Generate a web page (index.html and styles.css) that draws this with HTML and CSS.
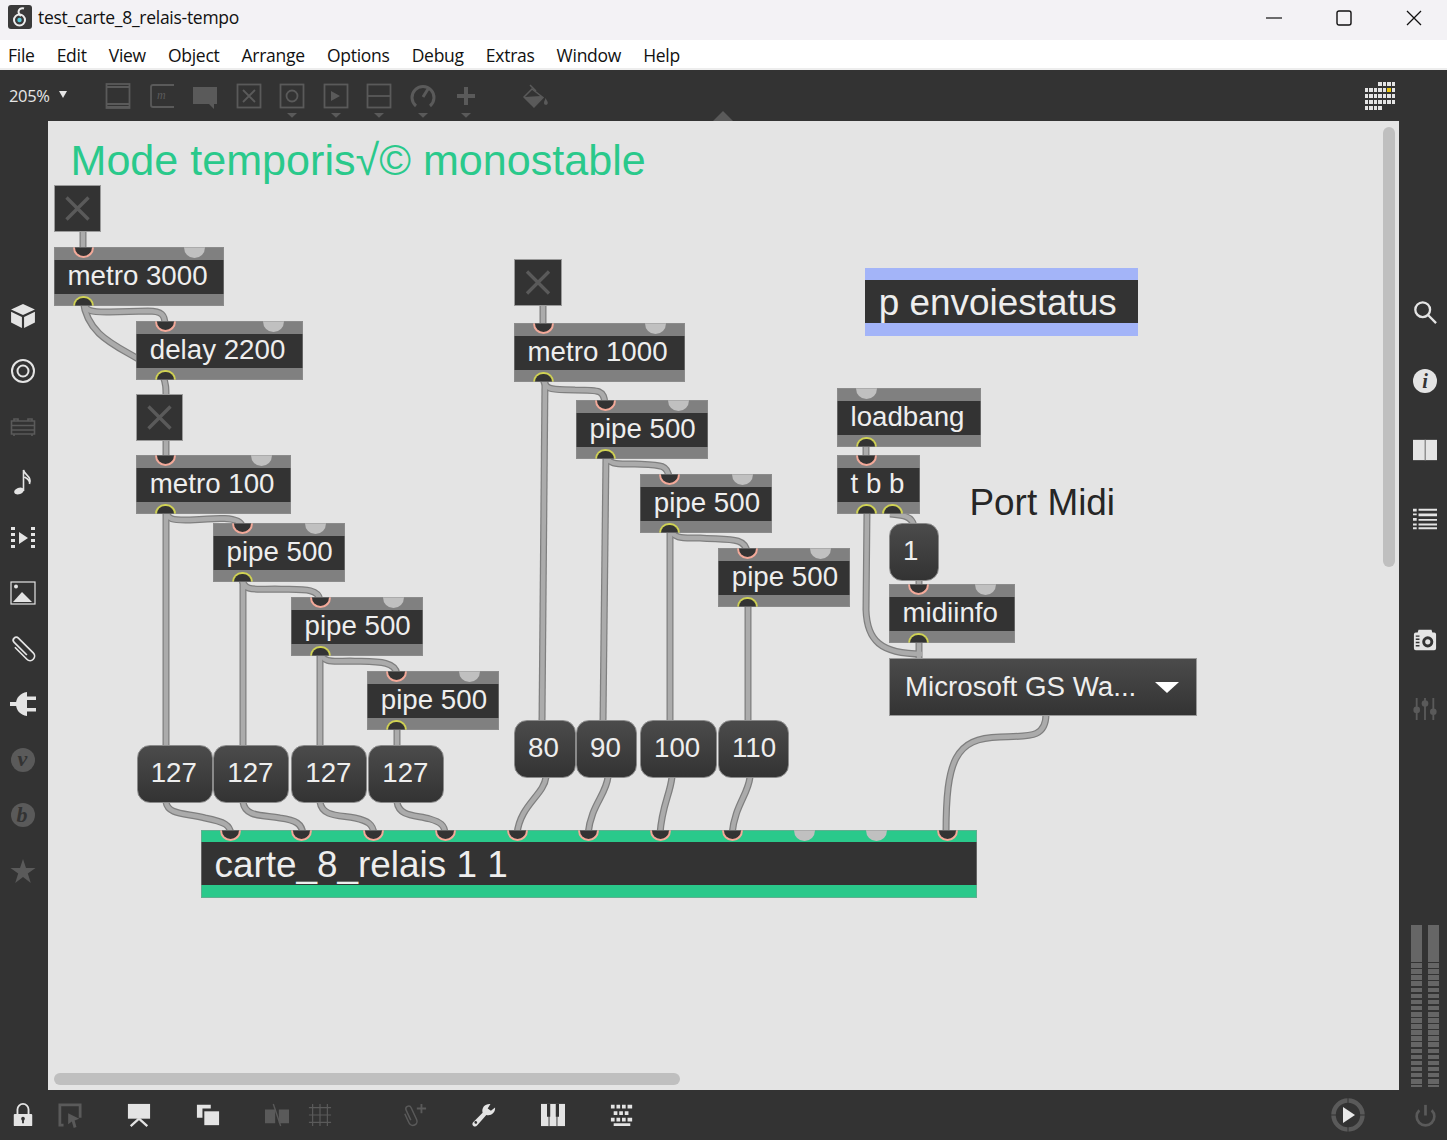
FILE: index.html
```html
<!DOCTYPE html>
<html lang="en">
<head>
<meta charset="utf-8">
<title>test_carte_8_relais-tempo</title>
<link rel="stylesheet" href="styles.css">
</head>
<body>
<div class="window">
  <header class="titlebar">
    <svg class="app-icon" viewBox="0 0 24 24"><rect width="24" height="24" rx="3" fill="#3a3a3a"/><path d="M16 3.500c-3-1-5.500 1-5.500 3.500 0 2 1.500 3 2.500 4" fill="none" stroke="#eee" stroke-width="2"/><circle cx="11.500" cy="15" r="5.500" fill="none" stroke="#eee" stroke-width="2"/><circle cx="11.500" cy="15" r="2.200" fill="#58c8d8"/></svg>
    <span class="title-text">test_carte_8_relais-tempo</span>
    <div class="win-controls">
      <svg viewBox="0 0 16 16"><path d="M0 8h16" stroke="#111" stroke-width="1.200"/></svg>
      <svg viewBox="0 0 16 16"><rect x="1" y="1" width="14" height="14" rx="2" fill="none" stroke="#111" stroke-width="1.400"/></svg>
      <svg viewBox="0 0 16 16"><path d="M1 1l14 14M15 1L1 15" stroke="#111" stroke-width="1.300"/></svg>
    </div>
  </header>
  <nav class="menubar">
    <span>File</span><span>Edit</span><span>View</span><span>Object</span><span>Arrange</span><span>Options</span><span>Debug</span><span>Extras</span><span>Window</span><span>Help</span>
  </nav>
  <div class="toolbar">
    <span class="zoom-label">205%</span><span class="zoom-caret"></span>
    <div class="tools">
      <svg viewBox="0 0 26 26" class="tool line"><rect x="1.500" y="1" width="23" height="24"/><path d="M1 4h24M1 21h24M1 24h24"/></svg>
      <svg viewBox="0 0 26 26" class="tool line"><path d="M25 2H4Q2 2 2 4v18q0 2 2 2h21"/><text x="8" y="16" class="glyph-m">m</text></svg>
      <svg viewBox="0 0 26 26" class="tool solid"><path d="M1 4h24v17h-3v5l-5-5H1z"/></svg>
      <svg viewBox="0 0 26 26" class="tool line"><rect x="1.500" y="1.500" width="23" height="23"/><path d="M7 7l12 12M19 7L7 19"/></svg>
      <svg viewBox="0 0 26 26" class="tool line"><rect x="1.500" y="1.500" width="23" height="23"/><circle cx="13" cy="13" r="5.500"/><path class="caret" d="M8 30h10l-5 4.700z"/></svg>
      <svg viewBox="0 0 26 26" class="tool line"><rect x="1.500" y="1.500" width="23" height="23"/><path class="caret" d="M8 8l9 5-9 5zM8 30h10l-5 4.700z"/></svg>
      <svg viewBox="0 0 26 26" class="tool line"><rect x="1.500" y="1.500" width="23" height="23"/><path d="M2 13h22"/><path class="caret" d="M8 30h10l-5 4.700z"/></svg>
      <svg viewBox="0 0 26 26" class="tool line thick"><path d="M6 23A11 11 0 1 1 20 23M13 14l5-8"/><path class="caret" d="M8 30h10l-5 4.700z"/></svg>
      <svg viewBox="0 0 26 26" class="tool solid"><path d="M11 4h4v7h7v4h-7v7h-4v-7H4v-4h7z"/><path d="M8 30h10l-5 4.700z"/></svg>
      <svg viewBox="0 0 26 26" class="tool tool-paint"><path d="M9 6L1 14l10 10 9-9.500z" fill="none" stroke="#5a5a5a" stroke-width="1.500"/><path d="M1 14l17-1 2 1.500-9 9.500z" fill="#5a5a5a"/><path d="M7 2l6 6" stroke="#5a5a5a" stroke-width="1.500"/><path d="M22.500 15c1.500 3 3 4 2 6-1 1.500-3.500 1-3.500-1 0-1.500 1-3 1.500-5z" fill="#5a5a5a"/></svg>
    </div>
    <div class="presentation-grid">
      <i class="blank"></i><i class="blank"></i><i class="blank"></i><i></i><i></i><i></i><i></i>
      <i></i><i></i><i></i><i></i><i></i><i class="on"></i><i></i>
      <i></i><i></i><i></i><i></i><i></i><i></i><i></i>
      <i></i><i></i><i></i><i></i><i></i><i></i><i></i>
      <i></i><i></i><i></i><i></i>
    </div>
    <i class="notch"></i>
  </div>

  <div class="workspace">
    <aside class="sidebar left-bar">
      <svg viewBox="0 0 24 24" class="ico"><path d="M12 1l11 5-11 5L1 6z" fill="#e4e4e4"/><path d="M1 8l10 5v10L1 18zM23 8l-10 5v10l10-5z" fill="#e4e4e4"/></svg>
      <svg viewBox="0 0 26 26" class="ico"><circle cx="13" cy="13" r="11" fill="none" stroke="#e4e4e4" stroke-width="2"/><circle cx="13" cy="13" r="5.500" fill="none" stroke="#e4e4e4" stroke-width="2"/></svg>
      <svg viewBox="0 0 26 26" class="ico"><path d="M1.500 7h23v13h-23zM1 11.500h24M1 16h24M4 7V5h4v2M18 7V5h4v2M4 20v2M22 20v2" fill="none" stroke="#5a5a5a" stroke-width="1.600"/></svg>
      <svg viewBox="0 0 26 26" class="ico"><ellipse cx="9" cy="22" rx="5" ry="3.200" fill="#e4e4e4" transform="rotate(-20 9 22)"/><path d="M13.500 22V1c1 5 9 7 6 14 1-4-3-6-5-7" fill="none" stroke="#e4e4e4" stroke-width="1.600"/></svg>
      <svg viewBox="0 0 26 26" class="ico"><path d="M1 2h4v3H1zM1 8h4v3H1zM1 14h4v3H1zM1 20h4v3H1zM21 2h4v3h-4zM21 8h4v3h-4zM21 14h4v3h-4zM21 20h4v3h-4zM9 7l9 6-9 6z" fill="#e4e4e4"/></svg>
      <svg viewBox="0 0 26 26" class="ico"><rect x="1" y="2" width="24" height="22" fill="none" stroke="#e4e4e4" stroke-width="1.200"/><circle cx="6" cy="6.500" r="2" fill="#e4e4e4"/><path d="M3 22l9-10 10 10z" fill="#e4e4e4"/></svg>
      <svg viewBox="0 0 26 26" class="ico"><path transform="rotate(-45 13 13)" d="M8.500 6v17a4.500 4.500 0 0 0 9 0V2a3 3 0 0 0-6 0v18" fill="none" stroke="#e4e4e4" stroke-width="1.700"/></svg>
      <svg viewBox="0 0 26 26" class="ico"><path d="M6 13C6 7 10 2 17 1v24C10 24 6 19 6 13zM0 11h7v4H0zM17 5.500h9V9h-9zM17 17h9v3.500h-9z" fill="#e4e4e4"/></svg>
      <svg viewBox="0 0 26 26" class="ico"><circle cx="13" cy="13" r="12" fill="#5a5a5a"/><text x="12.500" y="19" class="glyph-round">v</text></svg>
      <svg viewBox="0 0 26 26" class="ico"><circle cx="13" cy="13" r="12" fill="#5a5a5a"/><text x="12" y="20" class="glyph-round">b</text></svg>
      <svg viewBox="0 0 26 26" class="ico"><path d="M13 1l3 9h9.500l-7.700 5.500 3 9.500-7.800-6-7.800 6 3-9.500L.5 10H10z" fill="#5a5a5a"/></svg>
    </aside>

    <main class="canvas">
      <svg class="wires" viewBox="48 121 1351 969">
        <defs>
          <g id="cords">
            <path d="M83 232V250"/>
            <path d="M83 300C84 313 95 312 110 312L148 311C162 311 165 315 165 325"/>
            <path d="M83 300C87 335 115 345 140 360"/>
            <path d="M163 376C166 384 166 388 166 396"/>
            <path d="M166 440V458"/>
            <path d="M166 510C167 521 175 520 190 520C215 518 240 516 242 526"/>
            <path d="M166 510V748"/>
            <path d="M242 578C243 592 255 589 275 589C300 590 318 587 320 600"/>
            <path d="M243 578V748"/>
            <path d="M320 651C322 664 335 661 350 661C375 662 395 660 397 674"/>
            <path d="M320 651V748"/>
            <path d="M397 725V748"/>
            <path d="M166 802C168 815 185 813 205 818C225 822 230 825 231 834"/>
            <path d="M243 802C245 817 262 815 280 818C296 820 302 824 303 834"/>
            <path d="M320 802C322 817 340 815 355 818C368 821 373 824 374 834"/>
            <path d="M397 802C399 817 416 815 430 819C440 822 445 825 445 834"/>
            <path d="M543 305V326"/>
            <path d="M545 378L542 722"/>
            <path d="M543 378C545 392 555 389 575 390C600 390 604 390 605 404"/>
            <path d="M606 453L603 722"/>
            <path d="M605 453C607 466 620 464 635 464C660 465 668 464 669 478"/>
            <path d="M670 527V722"/>
            <path d="M670 527C672 540 685 538 700 538C730 540 745 537 747 552"/>
            <path d="M748 602V722"/>
            <path d="M546 777C544 795 520 805 517 834"/>
            <path d="M608 777C606 795 591 805 588 834"/>
            <path d="M672 777C670 795 662 805 660 834"/>
            <path d="M750 777C748 795 735 805 732 834"/>
            <path d="M866 440V458"/>
            <path d="M867 510L866 610C867 640 880 654 922 654"/>
            <path d="M890 514C900 515 912 515 914 526"/>
            <path d="M919 578V590"/>
            <path d="M919 640V660"/>
            <path d="M1046 714C1046 738 1030 736 1000 737C955 738 946 760 946 834"/>
          </g>
        </defs>
        <use href="#cords" class="cord-edge"/>
        <use href="#cords" class="cord-core"/>
      </svg>

      <p class="comment heading">Mode temporis√© monostable</p>
      <p class="comment port-midi">Port Midi</p>

      <div class="toggle t1"><svg viewBox="0 0 47 47"><path d="M12 12l23 23M35 12L12 35"/></svg></div>
      <div class="toggle t2"><svg viewBox="0 0 47 47"><path d="M12 12l23 23M35 12L12 35"/></svg></div>
      <div class="toggle t3"><svg viewBox="0 0 47 47"><path d="M12 12l23 23M35 12L12 35"/></svg></div>

      <div class="obj metro3000"><div class="ports"><i class="in"></i><i class="idle"></i></div><div class="label">metro 3000</div><div class="ports"><i class="out"></i></div></div>
      <div class="obj delay"><div class="ports"><i class="in"></i><i class="idle"></i></div><div class="label">delay 2200</div><div class="ports"><i class="out"></i></div></div>
      <div class="obj metro100"><div class="ports"><i class="in"></i><i class="idle"></i></div><div class="label">metro 100</div><div class="ports"><i class="out"></i></div></div>
      <div class="obj pipe p1"><div class="ports"><i class="in"></i><i class="idle"></i></div><div class="label">pipe 500</div><div class="ports"><i class="out"></i></div></div>
      <div class="obj pipe p2"><div class="ports"><i class="in"></i><i class="idle"></i></div><div class="label">pipe 500</div><div class="ports"><i class="out"></i></div></div>
      <div class="obj pipe p3"><div class="ports"><i class="in"></i><i class="idle"></i></div><div class="label">pipe 500</div><div class="ports"><i class="out"></i></div></div>
      <div class="obj metro1000"><div class="ports"><i class="in"></i><i class="idle"></i></div><div class="label">metro 1000</div><div class="ports"><i class="out"></i></div></div>
      <div class="obj pipe p4"><div class="ports"><i class="in"></i><i class="idle"></i></div><div class="label">pipe 500</div><div class="ports"><i class="out"></i></div></div>
      <div class="obj pipe p5"><div class="ports"><i class="in"></i><i class="idle"></i></div><div class="label">pipe 500</div><div class="ports"><i class="out"></i></div></div>
      <div class="obj pipe p6"><div class="ports"><i class="in"></i><i class="idle"></i></div><div class="label">pipe 500</div><div class="ports"><i class="out"></i></div></div>
      <div class="obj loadbang"><div class="ports"><i class="idle"></i></div><div class="label">loadbang</div><div class="ports"><i class="out"></i></div></div>
      <div class="obj tbb"><div class="ports"><i class="in"></i></div><div class="label">t b b</div><div class="ports"><i class="out"></i><i class="out"></i></div></div>
      <div class="obj midiinfo"><div class="ports"><i class="in"></i><i class="idle"></i></div><div class="label">midiinfo</div><div class="ports"><i class="out"></i></div></div>

      <div class="obj big carte"><div class="ports"><i class="in"></i><i class="in"></i><i class="in"></i><i class="in"></i><i class="in"></i><i class="in"></i><i class="in"></i><i class="in"></i><i class="idle"></i><i class="idle"></i><i class="in"></i></div><div class="label">carte_8_relais 1 1</div><div class="ports"></div></div>
      <div class="obj big envoie"><div class="ports"></div><div class="label">p envoiestatus</div><div class="ports"></div></div>

      <div class="num n127a">127</div>
      <div class="num n127b">127</div>
      <div class="num n127c">127</div>
      <div class="num n127d">127</div>
      <div class="num n80">80</div>
      <div class="num n90">90</div>
      <div class="num n100">100</div>
      <div class="num n110">110</div>
      <div class="num n1">1</div>
      <div class="umenu"><span>Microsoft GS Wa...</span><i class="umenu-caret"></i></div>

      <div class="scroll scroll-v"></div>
      <div class="scroll scroll-h"></div>
    </main>

    <aside class="sidebar right-bar">
      <svg viewBox="0 0 26 26" class="ico"><circle cx="10.500" cy="10.500" r="8" fill="none" stroke="#e4e4e4" stroke-width="2.500"/><path d="M16 16l9 9" stroke="#e4e4e4" stroke-width="2.500"/></svg>
      <svg viewBox="0 0 26 26" class="ico"><circle cx="13" cy="13" r="13" fill="#e4e4e4"/><text x="13" y="21" class="glyph-info">i</text></svg>
      <svg viewBox="0 0 26 26" class="ico"><path d="M0 2h26v22H0z" fill="#e4e4e4"/><path d="M12.500 2h1.500v22h-1.500z" fill="#8a8a8a"/></svg>
      <svg viewBox="0 0 26 26" class="ico"><path d="M0 2h4v3H0zM6 2h20v2H6zM0 7h4v2H0zM6 7h20v3H6zM0 12h4v3H0zM6 13h20v2H6zM0 18h4v2H0zM6 18h20v2H6zM0 22h4v2H0zM6 22h20v2H6z" fill="#e4e4e4"/></svg>
      <svg viewBox="0 0 26 26" class="ico camera"><path d="M1 7a2 2 0 0 1 2-2h2l1-3h14l1 3h2a2 2 0 0 1 2 2v15a2 2 0 0 1-2 2H3a2 2 0 0 1-2-2z" fill="#e4e4e4"/><circle cx="16" cy="15" r="6" fill="#333"/><circle cx="16" cy="15" r="2.800" fill="#e4e4e4"/><path d="M3 8h4v1.500H3zM3 11.500h4V13H3zM3 15h4v1.500H3zM3 18.500h4V20H3z" fill="#333"/></svg>
      <svg viewBox="0 0 26 26" class="ico"><path d="M4 1v24M13 1v24M22 1v24" stroke="#5a5a5a" stroke-width="2"/><circle cx="4" cy="14" r="3.600" fill="#5a5a5a"/><circle cx="13" cy="7" r="3.600" fill="#5a5a5a"/><circle cx="22" cy="16" r="3.600" fill="#5a5a5a"/></svg>
      <div class="meters"><div class="meter"></div><div class="meter"></div></div>
    </aside>
  </div>

  <footer class="bottombar">
    <div class="bottom-left">
      <svg viewBox="0 0 24 26" class="bico lock"><path d="M6 12V7a6 6 0 0 1 12 0v5" fill="none" stroke="#e4e4e4" stroke-width="2"/><path d="M3 12h18a1 1 0 0 1 1 1v11a1 1 0 0 1-1 1H3a1 1 0 0 1-1-1V13a1 1 0 0 1 1-1z" fill="#e4e4e4"/><circle cx="12" cy="17" r="2" fill="#333"/><path d="M11 17h2v5h-2z" fill="#333"/></svg>
      <svg viewBox="0 0 26 26" class="bico sel"><path d="M6 24H2V2h22v14" fill="none" stroke="#5a5a5a" stroke-width="3"/><path d="M11 11l12 6-5 2 2 7-3 1-2-7-4 3z" fill="#5a5a5a"/></svg>
      <svg viewBox="0 0 26 26" class="bico pres"><path d="M1 1h24v16H1z" fill="#e4e4e4"/><path d="M13 17L4 25M13 17l9 8" stroke="#e4e4e4" stroke-width="2.500"/></svg>
      <svg viewBox="0 0 26 26" class="bico front"><path d="M1 2h15v4H7v10H1z" fill="#e4e4e4"/><path d="M9 9h16v15H9z" fill="#e4e4e4"/></svg>
      <svg viewBox="0 0 26 26" class="bico snap"><path d="M0 7h11v15H0zM15 7h11v15H15z" fill="#5a5a5a"/><path d="M9 1l8 24" stroke="#5a5a5a" stroke-width="1.500"/></svg>
      <svg viewBox="0 0 26 26" class="bico grid"><path d="M5 1v24M13 1v24M21 1v24M1 5h24M1 13h24M1 21h24" stroke="#5a5a5a" stroke-width="1.300"/></svg>
      <svg viewBox="0 0 26 26" class="bico clipadd"><path transform="rotate(-25 9 15)" d="M4 9v11a4.500 4.500 0 0 0 9 0V6a3 3 0 0 0-6 0v12" fill="none" stroke="#5a5a5a" stroke-width="1.600"/><path d="M15 6h10M20 1v10" stroke="#5a5a5a" stroke-width="2"/></svg>
      <svg viewBox="0 0 26 26" class="bico wrench"><path d="M1 21c-2 3 2 6 4.500 3.500L15.500 13c4.500 1.500 10-2 9.500-8l-4.500 3.500-3.500-2.500 3-5c-6-.5-10 4-8.500 9.500zM3 22a1.500 1.500 0 1 1 .1.100z" fill="#e4e4e4" fill-rule="evenodd"/></svg>
      <svg viewBox="0 0 26 26" class="bico piano"><path d="M0 1h26v24H0z" fill="#e4e4e4"/><path d="M6.500 1h3.500v14H9.200v10H8.200V15H6.500zM16 1h3.500v14h-1.700v10h-1V15H16z" fill="#333"/></svg>
      <svg viewBox="0 0 26 26" class="bico keys"><path d="M1 2h4v4H1zM7 2h4v4H7zM13 2h4v4h-4zM19 2h5v4h-5zM4 9h4v4H4zM10 9h4v4h-4zM16 9h4v4h-4zM1 16h4v4H1zM7 16h4v4H7zM13 16h4v4h-4zM19 16h5v4h-5zM4 22h18v3H4z" fill="#e4e4e4"/></svg>
    </div>
    <div class="bottom-right">
      <svg viewBox="0 0 36 36" class="audio"><circle cx="18" cy="18" r="14.500" fill="none" stroke="#5a5a5a" stroke-width="4.500"/><path d="M18 0v36M0 18h36" stroke="#333" stroke-width="1"/><path d="M13 10l12 8-12 8z" fill="#e8e8e8"/></svg>
      <svg viewBox="0 0 26 26" class="power"><path d="M6 7a10 10 0 1 0 14 0" fill="none" stroke="#5a5a5a" stroke-width="3"/><path d="M13 1v12" stroke="#5a5a5a" stroke-width="3"/></svg>
    </div>
  </footer>
</div>
</body>
</html>
```

FILE: styles.css
```css
* { box-sizing: border-box; }
html, body { margin: 0; padding: 0; height: 100%; overflow: hidden; }
body { font-family: "Liberation Sans", Arial, sans-serif; background: #333; }
.window { width: 1447px; height: 1140px; display: flex; flex-direction: column; }

.titlebar { height: 40px; background: #f3f2f5; display: flex; align-items: center; padding-left: 8px; flex: none; }
.app-icon { width: 24px; height: 24px; flex: none; margin-top: -6px; }
.title-text { margin-left: 6px; margin-top: -6px; font: 17.500px "Open Sans", sans-serif; letter-spacing: -.28px; color: #111; }
.win-controls { margin-left: auto; display: flex; align-items: center; gap: 54px; padding-right: 25px; margin-top: -5px; }
.win-controls svg { width: 16px; height: 16px; display: block; }

.menubar { height: 30px; background: #fff; border-bottom: 2px solid #ededed; display: flex; align-items: center; gap: 22px; padding: 2px 0 0 8px; flex: none; font: 17.500px "Open Sans", sans-serif; letter-spacing: -.26px; color: #111; }

.toolbar { height: 51px; flex: none; background: #333; display: flex; align-items: center; padding-left: 9px; position: relative; }
.zoom-label { color: #e6e6e6; font: 16.500px "Open Sans", sans-serif; letter-spacing: -.35px; width: 50px; }
.zoom-caret { width: 0; height: 0; border: 4.500px solid transparent; border-top: 7px solid #e6e6e6; border-bottom: 0; margin-top: -3px; }
.tools { display: flex; gap: 17.500px; margin-left: 38px; }
.tool { width: 26px; height: 26px; overflow: visible; flex: none; }
.line { fill: none; stroke: #5a5a5a; stroke-width: 1.800; }
.solid { fill: #5a5a5a; }
.thick { stroke-width: 3; }
.caret { fill: #5a5a5a; stroke: none; }
.glyph-m { font: italic 12px "Liberation Serif", serif; fill: #5a5a5a; stroke: none; }
.tool-paint { margin-left: 26px; }
.presentation-grid { margin-left: auto; margin-right: 52px; margin-top: 1px; display: grid; grid-template-columns: repeat(7, 3.300px); grid-auto-rows: 4.800px; gap: 1.200px; width: 30px; }
.presentation-grid i { background: #e4e4e4; display: block; }
.presentation-grid i.blank { background: none; }
.presentation-grid i.on { background: #e8c510; }
.notch { position: absolute; left: 713px; bottom: 0; width: 0; height: 0; border: 10px solid transparent; border-bottom: 10px solid #5a5a5a; border-top: 0; }

.workspace { flex: 1; display: flex; min-height: 0; }
.sidebar { width: 48px; flex: none; background: #333; display: flex; flex-direction: column; align-items: center; }
.left-bar { padding-top: 181.500px; gap: 29.500px; padding-right: 2px; }
.right-bar { padding-top: 179px; gap: 45px; padding-left: 4px; }
.ico { width: 26px; height: 26px; flex: none; overflow: visible; }
.right-bar .ico { width: 24px; height: 24px; }
.right-bar .camera { margin-top: 52px; }
.glyph-round { font: italic bold 22px "Liberation Serif", serif; text-anchor: middle; fill: #333; }
.glyph-info { font: italic bold 22px "Liberation Serif", serif; text-anchor: middle; fill: #333; }
.meters { margin-top: auto; margin-bottom: 3px; display: flex; gap: 6px; }
.meter { width: 11px; height: 162px; background:
  linear-gradient(#666, #666) top / 100% 36px no-repeat,
  repeating-linear-gradient(to bottom, #333 0, #333 1.500px, #666 1.500px, #666 6.100px); }

.canvas { flex: 1; background: #e4e4e4; position: relative; overflow: hidden; }
.wires { position: absolute; left: 0; top: 0; width: 1351px; height: 969px; fill: none; }
.cord-edge { stroke: #7f7f7f; stroke-width: 7px; fill: none; }
.cord-core { stroke: #ababab; stroke-width: 4.500px; fill: none; }

.comment { position: absolute; margin: 0; white-space: nowrap; }
.heading { left: 22.500px; top: 13px; font-size: 43.100px; line-height: 52px; color: #2ac98b; }
.port-midi { left: 921.500px; top: 360px; font-size: 36.900px; line-height: 44px; color: #262626; }

.toggle { position: absolute; width: 47px; height: 47px; background: #333; border: 1px solid #9a9a9a; }
.toggle svg { display: block; width: 100%; height: 100%; }
.toggle path { stroke: #5a5a5a; stroke-width: 3.500; fill: none; }
.t1 { left: 6px; top: 64px; }
.t2 { left: 88.300px; top: 273px; }
.t3 { left: 466px; top: 138px; width: 48px; }

.obj { position: absolute; height: 59px; display: flex; flex-direction: column; background: #333; outline: 1px solid rgba(150,150,150,.5); outline-offset: -1px; }
.ports { height: 12.500px; flex: none; background: #808080; display: flex; justify-content: space-between; padding: 0 19px; }
.label { flex: 1; background: #333; color: #eee; font-size: 27.700px; line-height: 32px; padding-left: 13.500px; white-space: nowrap; overflow: hidden; }
.ports i { display: block; width: 21px; height: 10.500px; flex: none; }
.ports .in { background: #333; border: 2.500px solid #f3a999; border-top: 0; border-radius: 0 0 11px 11px; }
.ports .idle { background: #c0c0c0; border-radius: 0 0 11px 11px; }
.ports .out { background: #333; border: 2.500px solid #d0d253; border-bottom: 0; border-radius: 11px 11px 0 0; margin-top: 2px; }

.metro3000 { left: 6px; top: 126px; width: 170px; }
.delay { left: 88.300px; top: 200px; width: 167px; }
.metro100 { left: 88.300px; top: 334px; width: 155px; }
.pipe { width: 132px; }
.p1 { left: 165px; top: 402px; }
.p2 { left: 243px; top: 476px; }
.p3 { left: 319.300px; top: 550px; }
.metro1000 { left: 466px; top: 202px; width: 171px; }
.p4 { left: 528px; top: 279px; }
.p5 { left: 592.300px; top: 353px; }
.p6 { left: 670.300px; top: 427px; }
.loadbang { left: 789px; top: 267px; width: 144px; }
.tbb { left: 789px; top: 334px; width: 83px; }
.tbb .ports:last-child { padding-right: 17.500px; }
.midiinfo { left: 841px; top: 463px; width: 126px; }

.big { height: 68px; }
.big .ports { background: #2ac98b; padding: 0 18.500px; }
.big .ports:first-child { height: 12px; }
.big .ports:last-child { height: 13px; }
.big .label { font-size: 36.900px; line-height: 45px; }
.carte { left: 153px; top: 709.300px; width: 776px; }
.envoie { left: 817.300px; top: 147px; width: 273px; outline: 0; }
.envoie .ports { background: #a3b4f8; }

.num { position: absolute; height: 58px; border-radius: 13px; background: linear-gradient(#4b4b4b, #333); border: 1px solid #8a8a8a; color: #eee; font-size: 27.700px; line-height: 54px; padding-left: 13px; }
.n127a { left: 88.700px; top: 624px; width: 76px; }
.n127b { left: 165.300px; top: 624px; width: 76px; }
.n127c { left: 243.300px; top: 624px; width: 76px; }
.n127d { left: 320.300px; top: 624px; width: 76px; }
.n80 { left: 466px; top: 599px; width: 62px; }
.n90 { left: 528px; top: 599px; width: 61px; }
.n100 { left: 592px; top: 599px; width: 77px; }
.n110 { left: 670px; top: 599px; width: 71px; }
.n1 { left: 841px; top: 402px; width: 50px; }

.umenu { position: absolute; left: 841px; top: 537px; width: 308px; height: 58px; background: linear-gradient(#4b4b4b, #333); outline: 1px solid #999; outline-offset: -1px; color: #eee; font-size: 27.700px; line-height: 58px; padding: 0 18px 0 16px; display: flex; justify-content: space-between; align-items: center; }
.umenu-caret { width: 0; height: 0; border: 12px solid transparent; border-top: 11px solid #fff; border-bottom: 0; }

.scroll { position: absolute; background: #bfbfbf; border-radius: 6px; }
.scroll-v { left: 1335px; top: 6px; width: 12px; height: 440px; }
.scroll-h { left: 6px; top: 952px; width: 626px; height: 12px; }

.bottombar { height: 50px; flex: none; background: #333; display: flex; align-items: center; justify-content: space-between; padding: 0 10px 0 11px; }
.bottom-left { display: flex; align-items: center; }
.bico { width: 24px; height: 24px; flex: none; overflow: visible; display: block; }
.sel { margin-left: 23px; }
.pres { margin-left: 45px; }
.front { margin-left: 45px; }
.snap { margin-left: 45px; }
.grid { margin-left: 19px; }
.clipadd { margin-left: 71px; }
.wrench { margin-left: 45px; }
.piano { margin-left: 45px; }
.keys { margin-left: 45px; }
.bottom-right { display: flex; align-items: center; gap: 48px; }
.audio { width: 36px; height: 36px; display: block; }
.power { width: 23px; height: 23px; display: block; }
```
